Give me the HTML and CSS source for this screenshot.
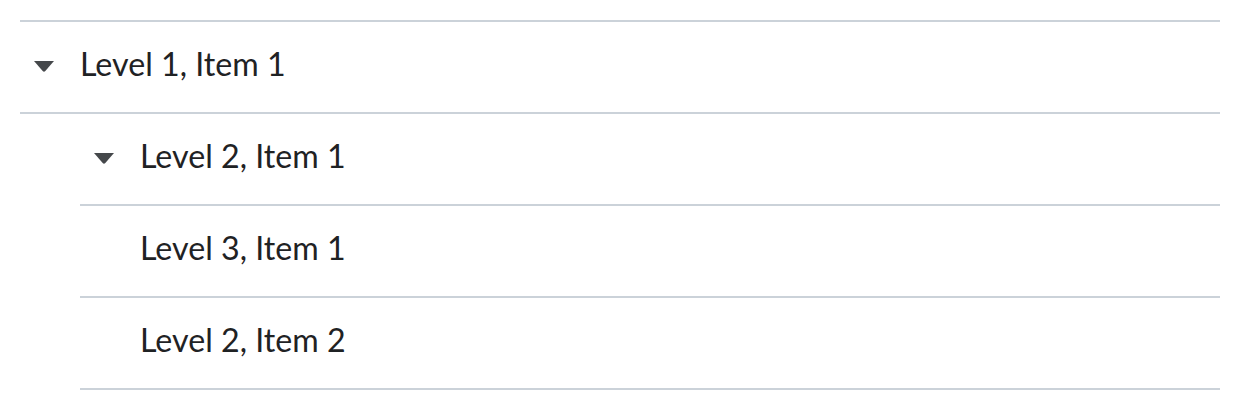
FILE: index.html
```html
<!DOCTYPE html>
<html>
<head>
<meta charset="utf-8">
<link rel="stylesheet" href="styles.css">
</head>
<body>
<div class="tree">
  <div class="row level1">
    <span class="toggle"><svg width="20" height="11" viewBox="0 0 20 11"><path d="M0 0 H20 L11.3 10 Q10 11.3 8.7 10 Z" fill="#45484b"/></svg></span>
    <span class="label">Level 1, Item 1</span>
  </div>
  <div class="children">
    <div class="row level2">
      <span class="toggle"><svg width="20" height="11" viewBox="0 0 20 11"><path d="M0 0 H20 L11.3 10 Q10 11.3 8.7 10 Z" fill="#45484b"/></svg></span>
      <span class="label">Level 2, Item 1</span>
    </div>
    <div class="row level2 noicon">
      <span class="label">Level 3, Item 1</span>
    </div>
    <div class="row level2 noicon">
      <span class="label">Level 2, Item 2</span>
    </div>
  </div>
</div>
</body>
</html>
```
FILE: styles.css
```css
html, body {
  margin: 0;
  background: #ffffff;
}
.tree {
  margin: 20px 20px 0 20px;
  border-top: 2px solid #cbd2d9;
  font-family: Lato, "Noto Sans", sans-serif;
  color: #1f2224;
}
.children {
  margin-left: 60px;
}
.row {
  height: 90px;
  display: flex;
  align-items: center;
  border-bottom: 2px solid #cbd2d9;
  padding-left: 14px;
  font-size: 32.2px;
}
.toggle {
  width: 20px;
  height: 11px;
  display: flex;
  margin-right: 47px;
  margin-top: -2px;
}
.toggle svg {
  display: block;
}
.label {
  margin-left: -21px;
  margin-top: -7px;
}
.noicon {
  padding-left: 60px;
}
.noicon .label {
  margin-left: 0;
}
```
